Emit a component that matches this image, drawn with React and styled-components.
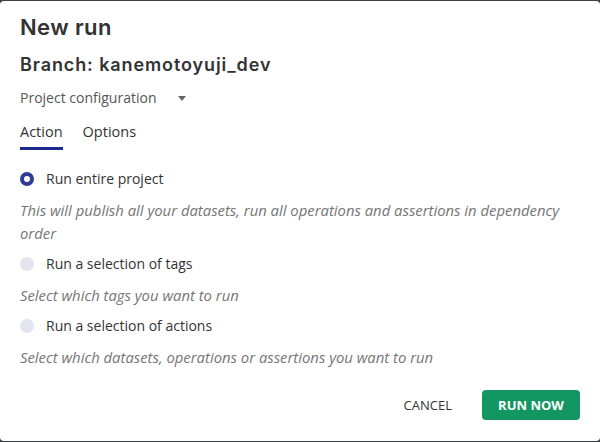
import { useState } from "react";
import styled, { createGlobalStyle } from "styled-components";

const GlobalStyle = createGlobalStyle`
  html, body {
    margin: 0;
    padding: 0;
    background: #3b3f42;
  }
  body {
    font-family: "Open Sans", "Liberation Sans", sans-serif;
  }
`;

const OPTIONS = [
  {
    id: "all",
    label: "Run entire project",
    hint: "This will publish all your datasets, run all operations and assertions in dependency order",
  },
  {
    id: "tags",
    label: "Run a selection of tags",
    hint: "Select which tags you want to run",
  },
  {
    id: "actions",
    label: "Run a selection of actions",
    hint: "Select which datasets, operations or assertions you want to run",
  },
];

export default function App() {
  const [tab, setTab] = useState("action");
  const [choice, setChoice] = useState("all");

  return (
    <>
      <GlobalStyle />
      <Dialog>
        <Title>New run</Title>
        <Branch>Branch: kanemotoyuji_dev</Branch>
        <ConfigSelect>
          Project configuration
          <Caret />
        </ConfigSelect>
        <Tabs>
          <Tab active={tab === "action"} onClick={() => setTab("action")}>
            Action
          </Tab>
          <Tab active={tab === "options"} onClick={() => setTab("options")}>
            Options
          </Tab>
        </Tabs>
        <OptionList>
          {OPTIONS.map((o) => (
            <Option key={o.id}>
              <RadioRow onClick={() => setChoice(o.id)}>
                <Radio checked={choice === o.id} />
                {o.label}
              </RadioRow>
              <Hint>{o.hint}</Hint>
            </Option>
          ))}
        </OptionList>
        <Actions>
          <TextButton>Cancel</TextButton>
          <PrimaryButton>Run now</PrimaryButton>
        </Actions>
      </Dialog>
    </>
  );
}

const Dialog = styled.div`
  box-sizing: border-box;
  margin-top: 1px;
  height: 440px;
  background: #fff;
  border-radius: 4px;
  padding: 12px 20px 0 20px;
  display: flex;
  flex-direction: column;
  color: #333;
`;

const Title = styled.h1`
  margin: 0;
  font-family: "Inter", "Open Sans", sans-serif;
  font-weight: 600;
  font-size: 22px;
  line-height: 28px;
  color: #333;
  letter-spacing: 0.4px;
`;

const Branch = styled.h2`
  margin: 12px 0 0 0;
  font-family: "Inter", "Open Sans", sans-serif;
  font-weight: 600;
  font-size: 18px;
  line-height: 24px;
  color: #333;
  letter-spacing: 0.9px;
`;

const ConfigSelect = styled.div`
  margin-top: 11px;
  display: flex;
  align-items: center;
  font-size: 14px;
  line-height: 20px;
  color: #555;
`;

const Caret = styled.span`
  margin-left: 22px;
  width: 0;
  height: 0;
  border-left: 4.5px solid transparent;
  border-right: 4.5px solid transparent;
  border-top: 5px solid #666;
`;

const Tabs = styled.div`
  margin-top: 14px;
  display: flex;
  gap: 20px;
`;

const Tab = styled.div`
  font-size: 14.5px;
  font-weight: 500;
  line-height: 20px;
  color: #333;
  padding-bottom: 5px;
  border-bottom: 3px solid ${(p) => (p.active ? "#1a2a8f" : "transparent")};
  cursor: pointer;
`;

const OptionList = styled.div`
  margin-top: 19px;
  display: flex;
  flex-direction: column;
  gap: 9px;
`;

const Option = styled.div`
  display: flex;
  flex-direction: column;
  gap: 10px;
`;

const RadioRow = styled.label`
  display: flex;
  align-items: center;
  gap: 12px;
  font-size: 14px;
  line-height: 20px;
  color: #333;
  cursor: pointer;
`;

const Radio = styled.span`
  box-sizing: border-box;
  width: 14px;
  height: 14px;
  border-radius: 50%;
  background: ${(p) => (p.checked ? "#fff" : "#e2e4f0")};
  border: ${(p) => (p.checked ? "4px solid #2f3b96" : "none")};
`;

const Hint = styled.div`
  font-size: 14.85px;
  font-style: italic;
  line-height: 23px;
  color: #757575;
`;

const Actions = styled.div`
  margin-top: auto;
  margin-bottom: 21px;
  display: flex;
  justify-content: flex-end;
  align-items: center;
  gap: 12px;
`;

const TextButton = styled.button`
  font-family: "Open Sans", sans-serif;
  font-size: 13px;
  text-transform: uppercase;
  color: #333;
  background: none;
  border: none;
  padding: 0 18px;
  height: 30px;
  cursor: pointer;
`;

const PrimaryButton = styled.button`
  font-family: "Open Sans", sans-serif;
  font-size: 13px;
  font-weight: 700;
  text-transform: uppercase;
  color: #fff;
  background: #139762;
  border: none;
  border-radius: 4px;
  width: 98px;
  height: 30px;
  cursor: pointer;
`;
